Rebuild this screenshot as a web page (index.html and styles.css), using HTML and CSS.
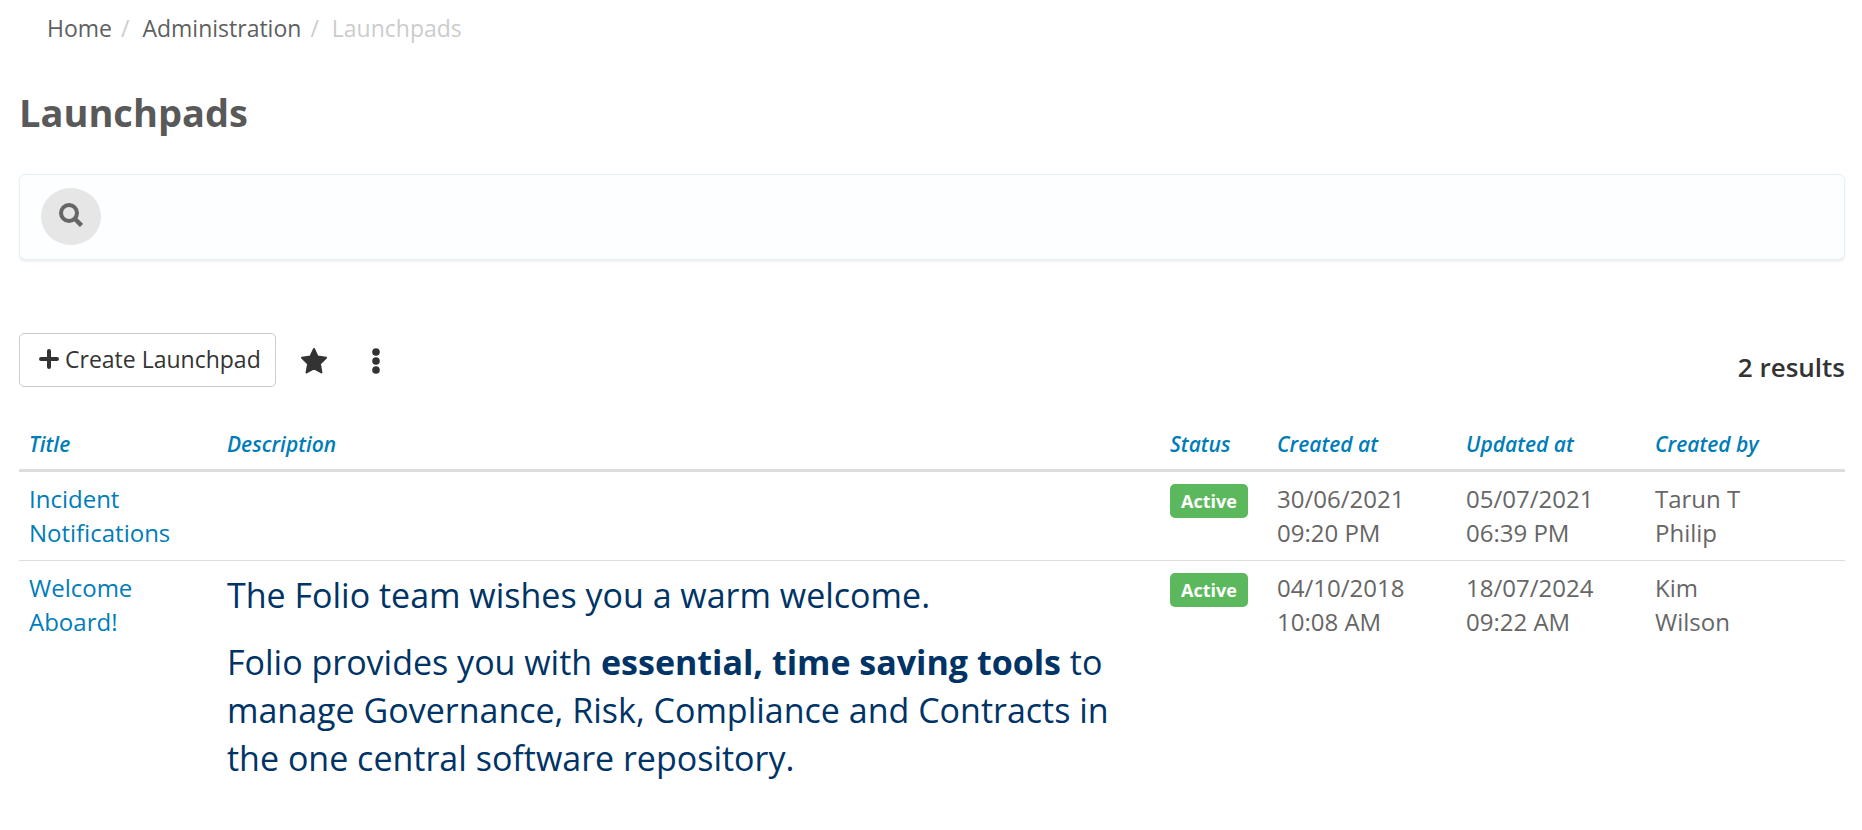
FILE: index.html
```html
<!DOCTYPE html>
<html lang="en">
<head>
    <meta charset="UTF-8">
    <meta name="viewport" content="width=device-width, initial-scale=1.0">
    <title>Launchpads</title>
    <link rel="stylesheet" href="styles.css">
</head>
<body>
    <nav aria-label="Breadcrumb">
        <ol class="breadcrumb">
            <li><a href="#">Home</a></li>
            <li><a href="#">Administration</a></li>
            <li class="active">Launchpads</li>
        </ol>
    </nav>

    <main>
        <h1>Launchpads</h1>

        <div class="search-panel">
            <button type="button" class="search-button" aria-label="Search">
                <svg class="icon-search" viewBox="0 0 24 24" fill="none" stroke="currentColor">
                    <circle cx="10" cy="10" r="8" stroke-width="4"/>
                    <path d="M15.5 15.5 L22.5 22.5" stroke-width="4.5"/>
                </svg>
            </button>
        </div>

        <div class="toolbar">
            <button type="button" class="btn-create">
                <svg class="icon-plus" viewBox="0 0 20 20" fill="none" stroke="currentColor" stroke-width="4" stroke-linecap="round">
                    <path d="M10 2 V18 M2 10 H18"/>
                </svg>
                Create Launchpad
            </button>
            <button type="button" class="btn-icon" aria-label="Favourite">
                <svg class="icon-star" viewBox="0 0 28 28" fill="currentColor" stroke="currentColor" stroke-width="2" stroke-linejoin="round">
                    <path d="M14 2 L17.6 9.6 L26 10.8 L19.9 16.7 L21.4 25.4 L14 21.4 L6.6 25.4 L8.1 16.7 L2 10.8 L10.4 9.6 Z"/>
                </svg>
            </button>
            <button type="button" class="btn-icon" aria-label="More actions">
                <svg class="icon-more" viewBox="0 0 8 26" fill="currentColor">
                    <circle cx="4" cy="4" r="3.8"/>
                    <circle cx="4" cy="13" r="3.8"/>
                    <circle cx="4" cy="22" r="3.8"/>
                </svg>
            </button>
            <span class="results">2 results</span>
        </div>

        <table class="table">
            <thead>
                <tr>
                    <th class="col-title"><a href="#">Title</a></th>
                    <th><a href="#">Description</a></th>
                    <th class="col-status"><a href="#">Status</a></th>
                    <th class="col-date"><a href="#">Created at</a></th>
                    <th class="col-date"><a href="#">Updated at</a></th>
                    <th class="col-user"><a href="#">Created by</a></th>
                </tr>
            </thead>
            <tbody>
                <tr>
                    <td><a href="#">Incident Notifications</a></td>
                    <td></td>
                    <td><span class="label">Active</span></td>
                    <td>30/06/2021 09:20 PM</td>
                    <td>05/07/2021 06:39 PM</td>
                    <td>Tarun T Philip</td>
                </tr>
                <tr>
                    <td><a href="#">Welcome Aboard!</a></td>
                    <td class="description">
                        <p>The Folio team wishes you a warm welcome.</p>
                        <p>Folio provides you with <strong>essential, time saving tools</strong> to manage Governance, Risk, Compliance and Contracts in the one central software repository.</p>
                    </td>
                    <td><span class="label">Active</span></td>
                    <td>04/10/2018 10:08 AM</td>
                    <td>18/07/2024 09:22 AM</td>
                    <td>Kim Wilson</td>
                </tr>
            </tbody>
        </table>
    </main>
</body>
</html>
```
FILE: styles.css
```css
* {
    box-sizing: border-box;
}
body {
    margin: 0;
    padding: 11px 17px 0 19px;
    font-family: "Open Sans", sans-serif;
    font-size: 24px;
    line-height: 34px;
    color: #666;
    background: #fff;
}
a {
    color: #007db8;
    text-decoration: none;
}
button {
    font-family: inherit;
    color: #333;
    background: none;
    border: none;
    padding: 0;
    cursor: pointer;
}
svg {
    display: block;
}
.breadcrumb {
    display: flex;
    margin: 0;
    padding: 0 28px;
    list-style: none;
    font-size: 23px;
}
.breadcrumb li + li::before {
    content: "/";
    padding: 0 13px 0 9px;
    color: #ccc;
}
.breadcrumb a {
    color: #5f5f5f;
}
.breadcrumb .active {
    color: #ccc;
}
h1 {
    margin: 39px 0 34px;
    font-size: 38px;
    line-height: 56px;
    color: #595959;
}
.search-panel {
    padding: 13px 21px 14px;
    border: 1px solid #def0fd;
    border-radius: 6px;
    background: #fcfeff;
    box-shadow: 0 2px 2px rgba(0, 0, 0, 0.06);
}
.search-button {
    display: flex;
    justify-content: center;
    align-items: center;
    width: 60px;
    height: 57px;
    padding-bottom: 3px;
    border-radius: 50%;
    background: #e6e6e6;
    color: #666;
}
.icon-search {
    width: 24px;
    height: 24px;
}
.toolbar {
    display: flex;
    align-items: center;
    margin-top: 73px;
}
.btn-create {
    display: flex;
    align-items: center;
    gap: 6px;
    height: 54px;
    padding: 0 14px 2px 19px;
    border: 1px solid #ccc;
    border-radius: 5px;
    background: #fff;
    font-size: 23px;
}
.icon-plus {
    width: 20px;
    height: 20px;
}
.btn-icon {
    margin-left: 24px;
    padding-top: 2px;
}
.btn-icon + .btn-icon {
    margin-left: 44px;
}
.icon-star {
    width: 28px;
    height: 28px;
}
.icon-more {
    width: 8px;
    height: 26px;
}
.results {
    margin-left: auto;
    padding-top: 14px;
    font-size: 26px;
    font-weight: 600;
    color: #333;
}
.table {
    width: 100%;
    margin-top: 28px;
    border-collapse: collapse;
    table-layout: fixed;
}
.table th {
    padding: 12px 10px 8px;
    border-bottom: 3px solid #ddd;
    font-size: 21px;
    font-style: italic;
    font-weight: 600;
    text-align: left;
}
.table td {
    padding: 10px;
    border-bottom: 1px solid #ddd;
    vertical-align: top;
}
.table tr:last-child td {
    border-bottom: none;
}
.col-title {
    width: 198px;
}
.col-status {
    width: 107px;
}
.col-date {
    width: 189px;
}
.col-user {
    width: 200px;
}
.table td:last-child {
    padding-right: 80px;
}
.label {
    display: inline-block;
    padding: 0 11px;
    border-radius: 5px;
    background: #5cb85c;
    color: #fff;
    font-size: 18px;
    font-weight: 700;
}
.description {
    font-size: 34px;
    line-height: 48px;
    color: #036;
}
.description p {
    margin: 0 0 19px;
}
```
